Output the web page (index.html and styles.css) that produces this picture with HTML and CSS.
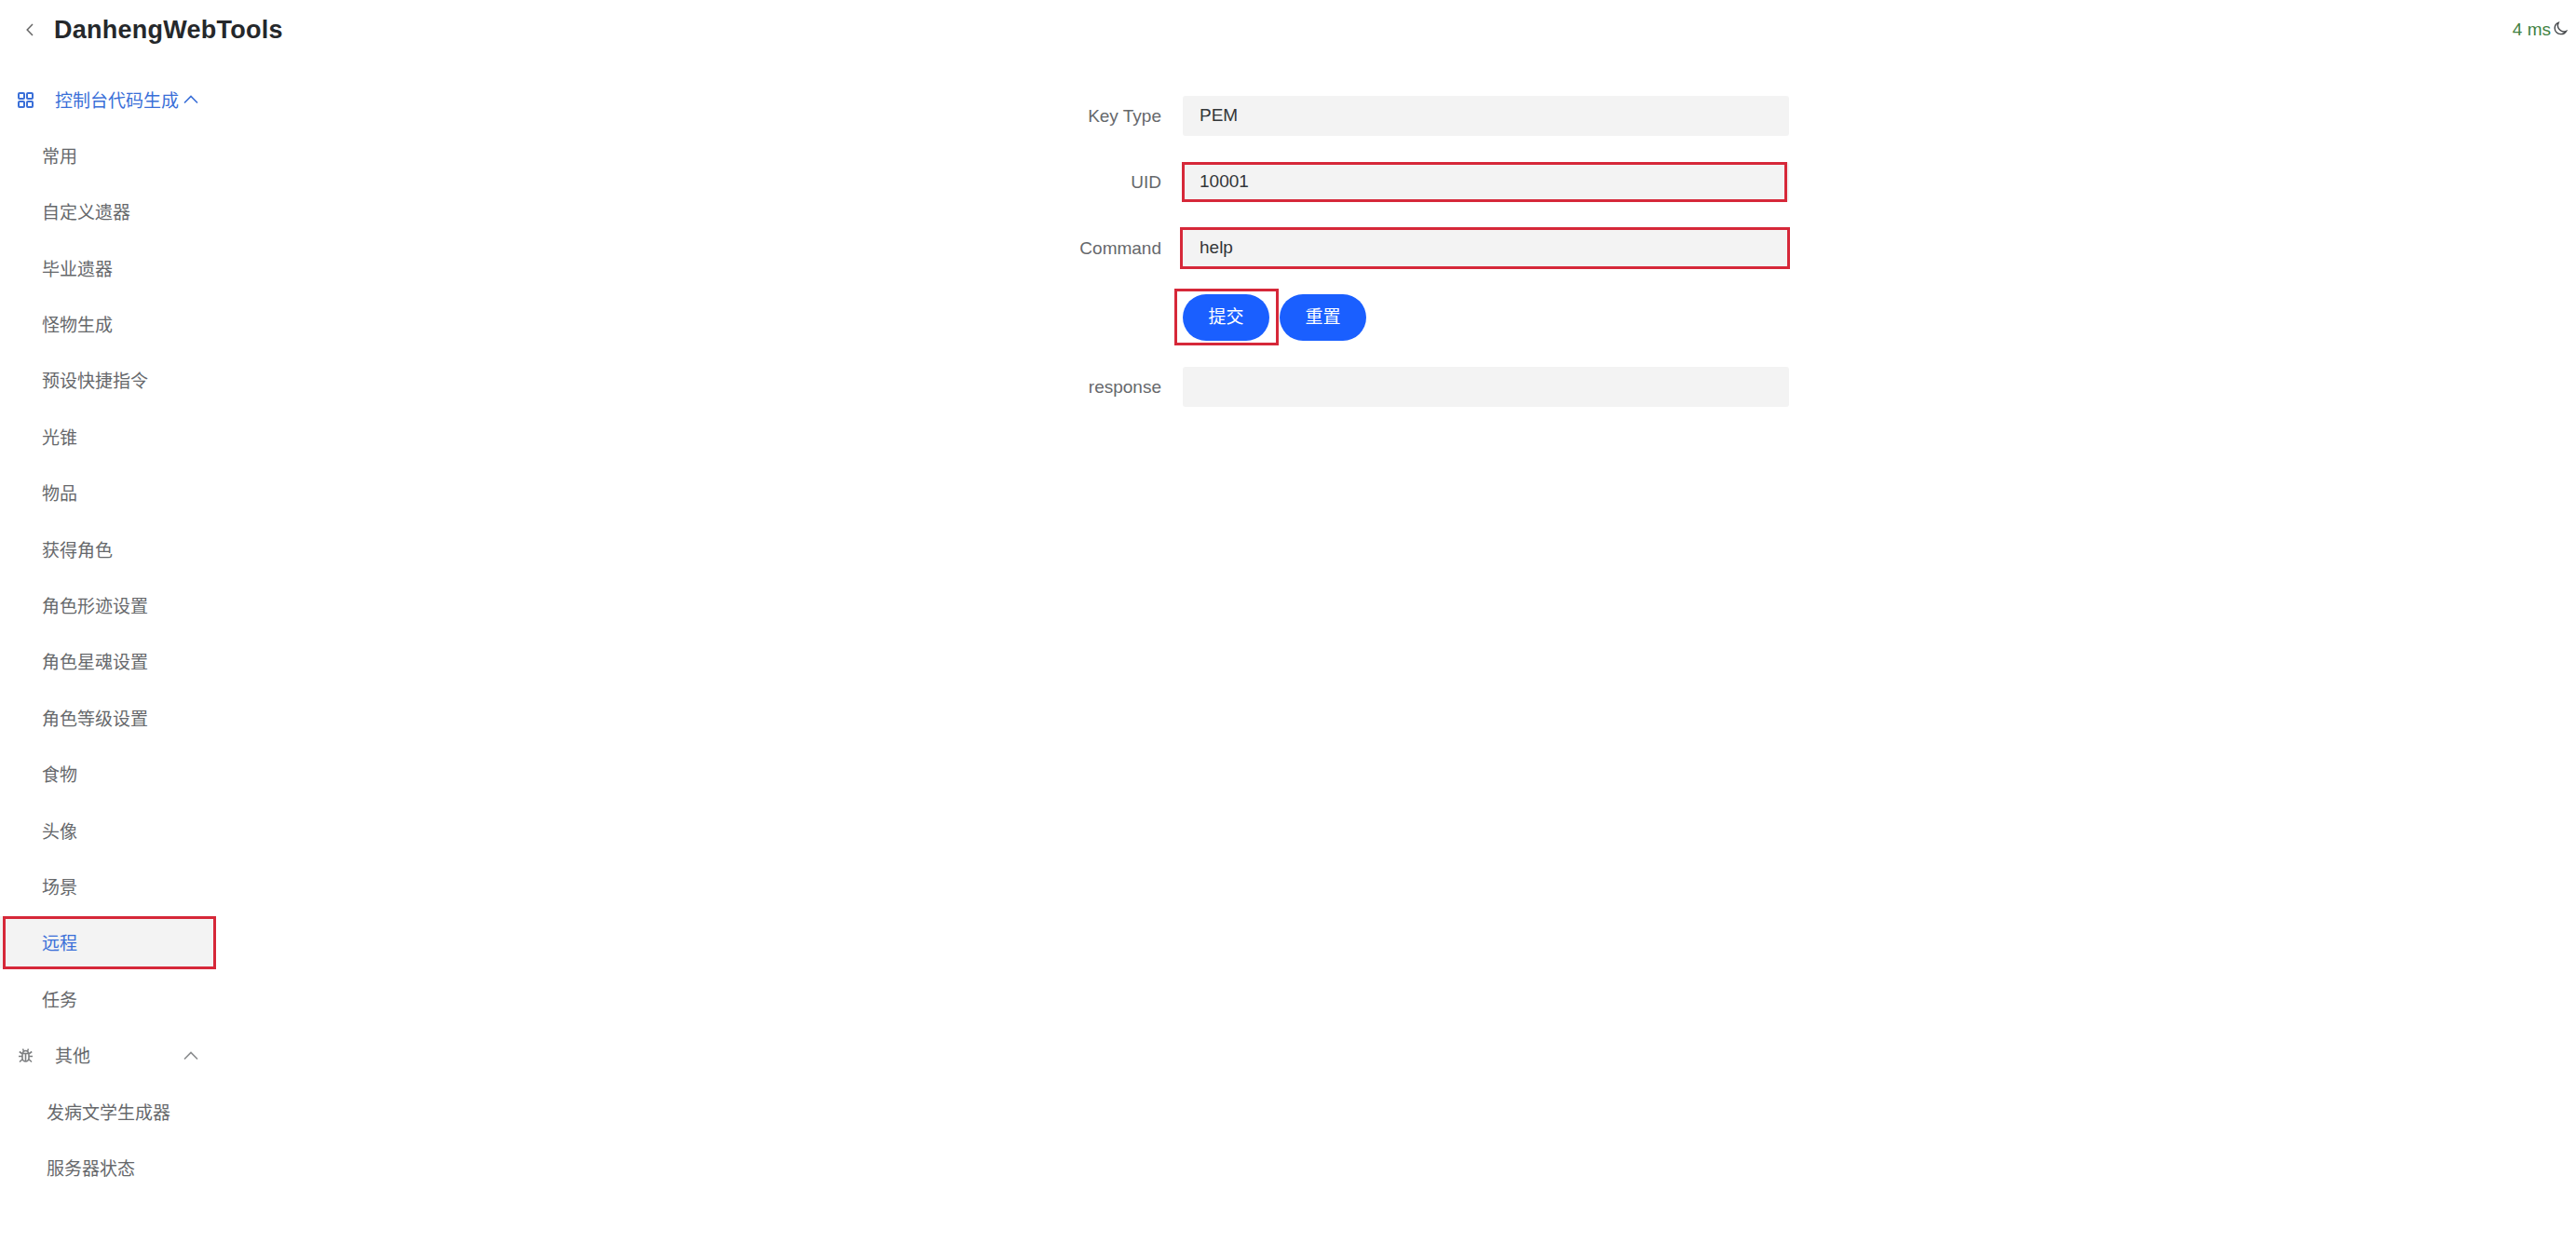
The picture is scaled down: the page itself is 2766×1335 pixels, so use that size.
FILE: index.html
```
<!DOCTYPE html>
<html lang="zh-CN">
<head>
<meta charset="UTF-8">
<meta name="viewport" content="width=device-width,initial-scale=1.0">
<title>DanhengWebTools</title>
<link rel="stylesheet" href="styles.css">
</head>
<body>
<header class="topbar">
<svg class="back" viewBox="0 0 8 14"><path d="M7 1 1.200 7 7 13"/></svg>
<div class="brand">DanhengWebTools</div>
<div class="status">
<span class="ping">4 ms</span>
<svg class="moon" viewBox="0 0 16 16"><path d="M5.500 1.500a7 7 0 0 0 9 9.500 6.800 6.800 0 0 1-6.500 3.500A6.600 6.600 0 0 1 1.300 8 6.700 6.700 0 0 1 5.500 1.500z"/></svg>
</div>
</header>
<div class="layout">
<nav class="menu">
<div class="item group active">
<svg class="icon" viewBox="0 0 17 17"><rect x="1" y="1" width="6" height="6" rx="1"/><rect x="10" y="1" width="6" height="6" rx="1"/><rect x="1" y="10" width="6" height="6" rx="1"/><rect x="10" y="10" width="6" height="6" rx="1"/></svg>
<span class="label">控制台代码生成</span>
<svg class="arrow" viewBox="0 0 16 10"><path d="M1 8.500l7-7 7 7"/></svg>
</div>
<div class="item">常用</div>
<div class="item">自定义遗器</div>
<div class="item">毕业遗器</div>
<div class="item">怪物生成</div>
<div class="item">预设快捷指令</div>
<div class="item">光锥</div>
<div class="item">物品</div>
<div class="item">获得角色</div>
<div class="item">角色形迹设置</div>
<div class="item">角色星魂设置</div>
<div class="item">角色等级设置</div>
<div class="item">食物</div>
<div class="item">头像</div>
<div class="item">场景</div>
<div class="item selected">远程<span class="mark mark-nav"></span></div>
<div class="item">任务</div>
<div class="item group">
<svg class="icon bug" viewBox="0 0 17 17"><path d="M5 6.500h7v5a3.500 3.500 0 0 1-7 0zM5.500 6.500a3 3 0 0 1 6 0M8.500 6.500v8.500M5 9.500H1M12 9.500h4M5.200 7 1.800 4.500M11.800 7l3.400-2.500M5.300 12.500 2 15.500M11.700 12.500l3.300 3M6.500 4 5.500 1.500M10.500 4l1-2.500"/></svg>
<span class="label">其他</span>
<svg class="arrow" viewBox="0 0 16 10"><path d="M1 8.500l7-7 7 7"/></svg>
</div>
<div class="item sub">发病文学生成器</div>
<div class="item sub">服务器状态</div>
</nav>
<main class="content">
<form class="form">
<div class="row">
<label class="name">Key Type</label>
<div class="field">PEM</div>
</div>
<div class="row">
<label class="name">UID</label>
<div class="field">10001<span class="mark mark-uid"></span></div>
</div>
<div class="row">
<label class="name">Command</label>
<div class="field">help<span class="mark mark-cmd"></span></div>
</div>
<div class="row row-btns">
<label class="name"></label>
<div class="btns">
<div class="btn">提交<span class="mark mark-btn"></span></div>
<div class="btn">重置</div>
</div>
</div>
<div class="row">
<label class="name">response</label>
<div class="field"></div>
</div>
</form>
</main>
</div>
</body>
</html>
```
FILE: styles.css
```
body{
margin:0;
background:#ffffff;
font-family:"Liberation Sans","Noto Sans CJK SC",sans-serif;
font-size:19px;
color:#333639;
}
.topbar{
display:flex;
align-items:center;
height:64px;
padding:0 9px 0 28px;
}
.back{
width:8px;
height:14px;
margin-right:22px;
fill:none;
stroke:#666;
stroke-width:1.500;
}
.brand{
font-size:27px;
font-weight:bold;
letter-spacing:.25px;
color:#25282b;
}
.status{
display:flex;
align-items:center;
margin-left:auto;
}
.ping{
color:#3f8243;
}
.moon{
width:15px;
height:15px;
margin-left:3px;
margin-top:-3px;
fill:none;
stroke:#44474a;
stroke-width:1.500;
}
.layout{
display:flex;
}
.menu{
display:flex;
flex-direction:column;
gap:4.400px;
width:232px;
padding-top:14px;
}
.item{
position:relative;
display:flex;
align-items:center;
height:56px;
padding-left:45px;
color:#66686b;
}
.item.group{
padding:0 19px;
}
.item.sub{
padding-left:50px;
}
.icon{
width:17px;
height:17px;
margin:2px 23px 0 0;
fill:none;
stroke:#7d7f81;
stroke-width:1.600;
}
.label{
flex:1;
}
.arrow{
width:16px;
height:10px;
margin-top:2px;
fill:none;
stroke:#8a8c8e;
stroke-width:1.600;
}
.active,.selected{
color:#3a6fd8;
}
.active .icon,.active .arrow{
stroke:#3a6fd8;
}
.active .icon{
stroke-width:2;
}
.selected{
background:#f3f3f3;
}
.content{
flex:1;
padding:39px 0 0 815px;
}
.row{
display:flex;
align-items:center;
gap:23px;
margin-bottom:28px;
}
.name{
width:200px;
text-align:right;
color:#66686b;
}
.field{
position:relative;
width:633px;
height:43px;
padding-left:18px;
line-height:42px;
background:#f3f3f3;
border-radius:3px;
}
.btns{
display:flex;
gap:11px;
}
.btn{
position:relative;
width:93px;
height:50px;
line-height:50px;
text-align:center;
color:#ffffff;
background:#1a5fff;
border-radius:25px;
}
/* red boxes drawn on top of the screenshot */
.mark{
position:absolute;
border:3px solid #d62839;
pointer-events:none;
}
.mark-nav{
left:3px;
right:0;
top:0;
bottom:-1px;
}
.mark-uid{
left:-1px;
right:2px;
top:0;
bottom:0;
}
.mark-cmd{
left:-3px;
right:-1px;
top:-1px;
bottom:-1px;
}
.mark-btn{
left:-9px;
right:-10px;
top:-6px;
bottom:-5px;
}
```
